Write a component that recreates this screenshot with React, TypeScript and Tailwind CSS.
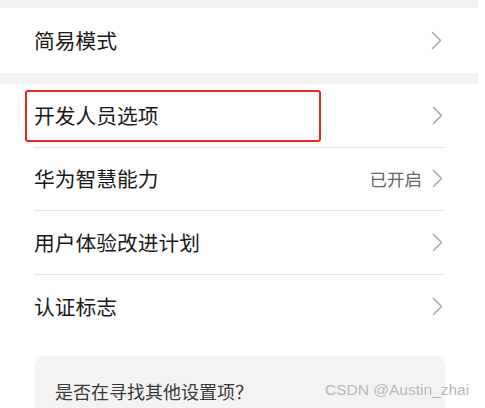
export default function App() {
  const Chevron = () => (
    <svg width="11" height="19" viewBox="0 0 11 19" fill="none" className="shrink-0">
      <polyline points="1.5,1.5 9.5,9.5 1.5,17.5" stroke="#a8a8a8" strokeWidth="1.6" strokeLinecap="round" strokeLinejoin="round" />
    </svg>
  )

  const rows = [
    { label: '开发人员选项', highlight: true },
    { label: '华为智慧能力', value: '已开启' },
    { label: '用户体验改进计划' },
    { label: '认证标志', last: true },
  ]

  return (
    <div
      className="w-[485px] h-[408px] overflow-hidden bg-white text-[#1a1a1a]"
      style={{ fontFamily: '"Noto Sans CJK SC", "Noto Sans", sans-serif' }}
    >
      {/* top band */}
      <div className="h-[8px] w-[478px] bg-[#f3f2f0]" />

      <div className="flex h-[65px] items-center justify-between pl-[34px] pr-[43px]">
        <span className="text-[20.75px] leading-none">简易模式</span>
        <Chevron />
      </div>

      <div className="h-[11px] w-[478px] bg-[#f3f2f0]" />

      <div className="pl-[34px] pr-[40px]">
        {rows.map((row) => (
          <div
            key={row.label}
            className={`relative flex h-[63.5px] items-center justify-between pr-[2px] ${row.last ? '' : 'border-b border-[#e3e3e3]'}`}
          >
            {row.highlight && (
              <div className="absolute left-[-9px] top-[6px] h-[52px] w-[296px] rounded-[3px] border-2 border-[#e62a20]" />
            )}
            <span className="text-[20.75px] leading-none">{row.label}</span>
            <div className="flex items-center gap-[10px]">
              {row.value && <span className="text-[17.5px] leading-none text-[#666]">{row.value}</span>}
              <Chevron />
            </div>
          </div>
        ))}
      </div>

      <div className="relative ml-[35px] mt-[18px] h-[70px] w-[410px] rounded-[10px] bg-[#f4f3f1] pl-[20px] pt-[24px]">
        <span className="text-[18px] leading-none text-[#3a3a3a]">是否在寻找其他设置项？</span>
      </div>

      <div
        className="pointer-events-none absolute left-[325px] top-[382px] text-[15.5px] leading-none text-[#b8b8b8]"
        style={{ fontFamily: '"Liberation Sans", sans-serif' }}
      >
        CSDN @Austin_zhai
      </div>
    </div>
  )
}
